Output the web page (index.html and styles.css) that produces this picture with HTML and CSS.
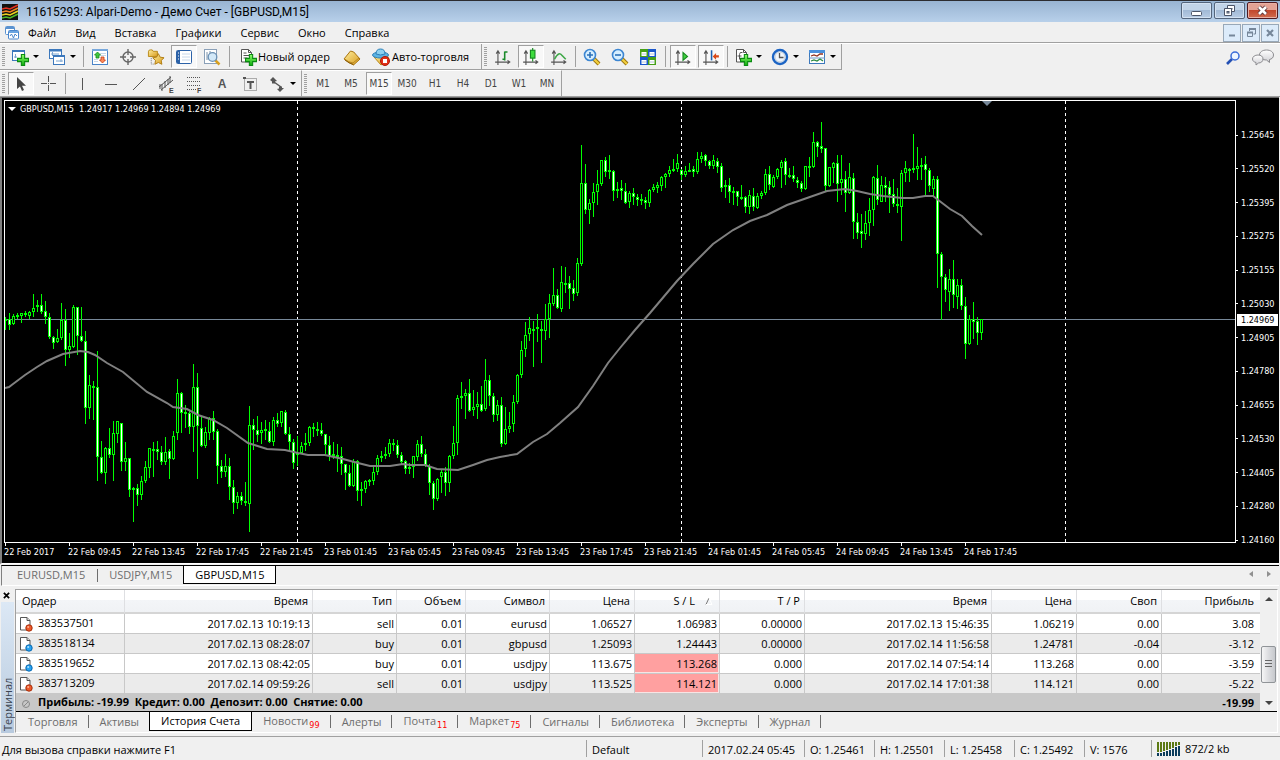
FILE: index.html
```html
<!DOCTYPE html>
<html lang="ru">
<head>
<meta charset="utf-8">
<title>11615293: Alpari-Demo - Демо Счет - [GBPUSD,M15]</title>
<link rel="stylesheet" href="styles.css">
</head>
<body>
<svg class="defs" aria-hidden="true">
  <defs>
    <linearGradient id="gGreen" x1="0" y1="0" x2="0" y2="1"><stop offset="0" stop-color="#8dff6a"/><stop offset="1" stop-color="#0ca90c"/></linearGradient>
    <linearGradient id="gGold" x1="0" y1="0" x2="1" y2="1"><stop offset="0" stop-color="#fff0a0"/><stop offset="1" stop-color="#d89a1c"/></linearGradient>
    <linearGradient id="gSilver" x1="0" y1="0" x2="0" y2="1"><stop offset="0" stop-color="#ffffff"/><stop offset="1" stop-color="#cfcfd4"/></linearGradient>
    <symbol id="plus" viewBox="0 0 11 11"><path d="M4 .5h3v3.500h3.500v3h-3.500v3.500h-3v-3.500h-3.500v-3h3.500z" fill="url(#gGreen)" stroke="#0a8a12"/></symbol>
    <symbol id="axes" viewBox="0 0 16 16"><path d="M3.500 3v12M1 12.500h13M2 5l1.500-2.500L5 5M12 11l2 1.500-2 1.500" fill="none" stroke="#555"/></symbol>
    <symbol id="lens" viewBox="0 0 18 18"><path d="M10.500 10.500l5.500 5.500" stroke="#9a7410" stroke-width="4"/><path d="M11 11l5 5" stroke="#f2cf3e" stroke-width="2.200"/><circle cx="7" cy="7" r="5.500" fill="#d7efff" stroke="#3c86d2" stroke-width="1.600"/></symbol>
    <symbol id="doc" viewBox="0 0 14 16"><path d="M1.500 1.500h6.500l3 3v9.500h-9.500z" fill="#fff" stroke="#555"/><path d="M8 1.500v3h3" fill="#ddd" stroke="#555"/></symbol>
    <symbol id="sell" viewBox="0 0 14 16"><use href="#doc" width="14" height="16"/><circle cx="10" cy="12" r="3.200" fill="#ee5a2a" stroke="#a82c08"/><circle cx="9.200" cy="11" r="1" fill="#ffb090"/></symbol>
    <symbol id="buy" viewBox="0 0 14 16"><use href="#doc" width="14" height="16"/><circle cx="10" cy="12" r="3.200" fill="#2aa4f2" stroke="#0868b0"/><circle cx="9.200" cy="11" r="1" fill="#a8e0ff"/></symbol>
  </defs>
</svg>

<header class="titlebar">
  <svg class="app-icon" viewBox="0 0 16 16"><rect width="16" height="16" fill="#111"/><g fill="none" stroke-width="1.600"><path d="M0 5l4-1 4 1 4-2 4-2" stroke="#e03020"/><path d="M0 8l4-1 4 1 4-2 4-2" stroke="#f08020"/><path d="M0 11l4-1 4 1 4-2 4-2" stroke="#e8d020"/><path d="M0 14l4-1 4 1 4-2 4-2" stroke="#50b828"/></g></svg>
  <h1>11615293: Alpari-Demo - Демо Счет - [GBPUSD,M15]</h1>
  <div class="window-buttons">
    <button aria-label="Свернуть"><svg viewBox="0 0 15 13"><rect x="2.500" y="7.500" width="10" height="4" rx="1" fill="#fff" stroke="#4c5568"/></svg></button>
    <button aria-label="Восстановить"><svg viewBox="0 0 15 13"><path d="M5.500 1.500h7v6h-7z" fill="#fff" stroke="#4c5568"/><rect x="8" y="4" width="2.500" height="1.500" fill="#4c5568"/><path d="M2.500 4.500h7v7h-7z" fill="#fff" stroke="#4c5568"/><rect x="5" y="7.500" width="2" height="1.500" fill="#b8c8e0" stroke="#4c5568"/></svg></button>
    <button class="close" aria-label="Закрыть"><svg viewBox="0 0 15 13"><path d="M4 3l7 7M11 3l-7 7" stroke="#5a3438" stroke-width="4.400"/><path d="M4 3l7 7M11 3l-7 7" stroke="#fff" stroke-width="2.600"/></svg></button>
  </div>
</header>

<nav class="menubar">
  <svg class="menu-icon" viewBox="0 0 16 16"><rect x="1.500" y="1.500" width="9" height="8" rx="1" fill="#fff" stroke="#5a92d0"/><path d="M2 3h8" stroke="#5a92d0" stroke-width="2"/><rect x="4.500" y="5.500" width="10" height="8.500" rx="1" fill="#fff" stroke="#4a86cc"/><path d="M5 7h9" stroke="#6aa4e0" stroke-width="2"/><path d="M6 11l1.500-2 2 4 1.500-4 2 2" fill="none" stroke="#4a86cc"/></svg>
  <div class="menus"><button>Файл</button><button>Вид</button><button>Вставка</button><button>Графики</button><button>Сервис</button><button>Окно</button><button>Справка</button></div>
  <div class="mdi-buttons">
    <button aria-label="Свернуть окно"><svg viewBox="0 0 12 12"><path d="M3 8.500h6" stroke="#76879a" stroke-width="2"/></svg></button>
    <button aria-label="Восстановить окно"><svg viewBox="0 0 12 12"><path d="M4.500 4v-1.500h6v4.500h-2" fill="none" stroke="#76879a"/><path d="M4 2h7" stroke="#76879a" stroke-width="2"/><path d="M2.500 5.500h5v4h-5z" fill="none" stroke="#76879a"/><path d="M2 5.500h6" stroke="#76879a" stroke-width="2"/></svg></button>
    <button aria-label="Закрыть окно"><svg viewBox="0 0 12 12"><path d="M3 3l6 6M9 3l-6 6" stroke="#76879a" stroke-width="2.200"/></svg></button>
  </div>
</nav>

<div class="toolbars">
  <div class="toolrow">
    <div class="toolbar">
      <i class="grip"></i>
      <button class="tool drop" aria-label="Новый график"><svg viewBox="0 0 18 18"><rect x="1.500" y="2.500" width="12" height="10" fill="#fff" stroke="#3c78bc"/><path d="M1 3h13" stroke="#3c78bc" stroke-width="2"/><path d="M4.500 6v4M3 9h3" stroke="#7aa4d0"/><use href="#plus" x="6" y="6" width="12" height="12"/></svg></button>
      <button class="tool drop" aria-label="Профили"><svg viewBox="0 0 18 18"><rect x="1.500" y="1.500" width="12" height="9" fill="#fff" stroke="#3c78bc"/><path d="M1 2.500h13" stroke="#3c78bc" stroke-width="2"/><rect x="5.500" y="7.500" width="11" height="9" fill="#fff" stroke="#3c78bc"/><path d="M5 8h12" stroke="#3c78bc" stroke-width="2"/><path d="M3 6h8M8 13h7M4.500 4v4M13 11v3" stroke="#7aa4d0"/></svg></button>
      <i class="sep"></i>
      <button class="tool" aria-label="Обзор рынка"><svg viewBox="0 0 18 18"><rect x="1.500" y="1.500" width="15" height="15" fill="#fff" stroke="#4a84c8"/><path d="M1 2h16" stroke="#78a8dc" stroke-width="2"/><path d="M9 5.500h6M9 7.500h6M3 11.500h4M3 13.500h4" stroke="#c8d8e8"/><path d="M6.500 4l3 3h-1.500v3h-3v-3h-1.500z" fill="#3fc63f" stroke="#178a17" stroke-width=".8"/><path d="M11.500 15l3-3h-1.500v-3h-3v3h-1.500z" fill="#ff8a5a" stroke="#c03c14" stroke-width=".8"/></svg></button>
      <button class="tool" aria-label="Окно данных"><svg viewBox="0 0 18 18"><circle cx="9" cy="9" r="5" fill="none" stroke="#666" stroke-width="1.400"/><path d="M9 1v6M9 11v6M1 9h6M11 9h6" stroke="#666" stroke-width="1.400"/></svg></button>
      <button class="tool" aria-label="Навигатор"><svg viewBox="0 0 19 18"><path d="M1.500 3.500q0-2 2-2h2l1 1.500h4.500v5.500h-9.500z" fill="url(#gGold)" stroke="#b88818"/><path d="M4.500 10v6.500h3" stroke="#777" stroke-dasharray="1 1" fill="none"/><path d="M12 5.500l1.900 3.700 4.100.6-3 2.900.7 4-3.700-1.900-3.700 1.900.7-4-3-2.900 4.100-.6z" fill="url(#gGold)" stroke="#b07c10"/></svg></button>
      <button class="tool pressed" aria-pressed="true" aria-label="Терминал"><svg viewBox="0 0 18 18"><rect x="1.500" y="2.500" width="15" height="13" rx="1" fill="#fff" stroke="#2c62a8"/><path d="M3.500 3v12" stroke="#2c62a8" stroke-width="3"/><path d="M3 5h1M3 8h1M3 11h1" stroke="#fff"/><path d="M7 6h8M7 9h8M7 12h8" stroke="#c8d8ea"/></svg></button>
      <button class="tool" aria-label="Тестер стратегий"><svg viewBox="0 0 18 18"><rect x="1.500" y="1.500" width="12" height="14" fill="#fff" stroke="#8aa0b8"/><path d="M4 4v8M7 3v4M10 4v3" stroke="#7890a8"/><path d="M12 12l4.500 4.500" stroke="#d8a020" stroke-width="2.500"/><circle cx="9.500" cy="9" r="4.300" fill="#d2e8f8" stroke="#6a90b4" stroke-width="1.300"/></svg></button>
      <i class="sep wide"></i>
      <button class="tool text order"><svg viewBox="0 0 18 18"><path d="M2.500 1.500h7l3 3v9.500h-10z" fill="#fff" stroke="#555"/><path d="M9.500 1.500v3h3M4.500 5h3M4.500 7.500h6M4.500 10h4" fill="none" stroke="#555"/><use href="#plus" x="6" y="6" width="12" height="12"/></svg>Новый ордер</button>
      <button class="tool" aria-label="MetaEditor"><svg viewBox="0 0 18 18"><path d="M1 11l6.500-8q4 .5 5 3l4.500 5-6.500 6q-5-2.500-9.500-6z" fill="url(#gGold)" stroke="#a87410"/><path d="M1.500 11q4 3.500 8.500 4l6-5" fill="none" stroke="#b88820"/><path d="M2 12q4 3.500 8.500 4.500" fill="none" stroke="#8c5c08"/></svg></button>
      <button class="tool text auto"><svg viewBox="0 0 20 18"><path d="M3 9l7 8 8-6-2-4z" fill="url(#gGold)" stroke="#b88818"/><ellipse cx="9.500" cy="7" rx="8" ry="3" fill="#5cb4e4" stroke="#2c80b8"/><path d="M5 6q0-5 4.500-5t4.500 5q-4.500 2-9 0z" fill="#8cd0f0" stroke="#2c80b8"/><circle cx="14" cy="13" r="4.500" fill="#e23018" stroke="#b01808"/><rect x="12" y="11" width="4" height="4" fill="#fff"/></svg>Авто-торговля</button>
    </div>
    <div class="toolbar">
      <i class="grip"></i>
      <button class="tool" aria-label="Бары"><svg viewBox="0 0 16 16"><use href="#axes" width="16" height="16"/><path d="M9.500 3v8M9.500 3.500h2.500M7.500 10h2" stroke="#1a8a2a" stroke-width="1.400"/></svg></button>
      <button class="tool pressed" aria-pressed="true" aria-label="Свечи"><svg viewBox="0 0 16 16"><use href="#axes" width="16" height="16"/><path d="M9.500 0v12" stroke="#178a20"/><rect x="7.500" y="2" width="4" height="7" fill="#3ddc3d" stroke="#178a20"/></svg></button>
      <button class="tool" aria-label="Линия"><svg viewBox="0 0 16 16"><use href="#axes" width="16" height="16"/><path d="M4 10q4-8 7-3l3 3" fill="none" stroke="#3fa848" stroke-width="1.400"/></svg></button>
      <i class="sep"></i>
      <button class="tool" aria-label="Увеличить"><svg viewBox="0 0 18 18"><use href="#lens" width="18" height="18"/><path d="M7 4v6M4 7h6" stroke="#2c70b8" stroke-width="1.600"/></svg></button>
      <button class="tool" aria-label="Уменьшить"><svg viewBox="0 0 18 18"><use href="#lens" width="18" height="18"/><path d="M4 7h6" stroke="#2c70b8" stroke-width="1.600"/></svg></button>
      <button class="tool" aria-label="Окна мозаикой"><svg viewBox="0 0 18 18"><path d="M1 1h8v8h-8zM9 9h8v8h-8z" fill="#46a018"/><path d="M9 1h8v8h-8zM1 9h8v8h-8z" fill="#1c58cc"/><path d="M2.500 4h5v4h-5zM10.500 4h5v4h-5zM2.500 12h5v4h-5zM10.500 12h5v4h-5z" fill="#fff"/><path d="M3 6h4M11 6h4M3 14h4M11 14h4" stroke="#b8c8d8"/></svg></button>
      <i class="sep wide"></i>
      <button class="tool pressed" aria-pressed="true" aria-label="Автопрокрутка"><svg viewBox="0 0 16 16"><use href="#axes" width="16" height="16"/><path d="M8 4v7l4-3.500z" fill="#3fd03f" stroke="#178a20"/></svg></button>
      <button class="tool pressed" aria-pressed="true" aria-label="Сдвиг графика"><svg viewBox="0 0 16 16"><use href="#axes" width="16" height="16"/><path d="M8.500 2v9" stroke="#1c60b0" stroke-width="1.400"/><path d="M9.500 7.500l3-3v2h2.500v2h-2.500v2z" fill="#d84818"/></svg></button>
      <i class="sep"></i>
      <button class="tool drop" aria-label="Индикаторы"><svg viewBox="0 0 18 18"><path d="M2.500 1.500h7l3 3v9.500h-10z" fill="#fff" stroke="#555"/><path d="M9.500 1.500v3h3M8.500 4.500q-3-1-3 2v5M3.500 8h4" fill="none" stroke="#555"/><use href="#plus" x="6" y="6" width="12" height="12"/></svg></button>
      <button class="tool drop" aria-label="Периоды"><svg viewBox="0 0 18 18"><circle cx="9" cy="9" r="7" fill="#f0f6fc" stroke="#1c64c4" stroke-width="2.400"/><circle cx="9" cy="9" r="5" fill="none" stroke="#c0ccd8"/><path d="M8.500 5v4.500h4" fill="none" stroke="#555" stroke-width="1.300"/></svg></button>
      <button class="tool drop" aria-label="Шаблоны"><svg viewBox="0 0 18 18"><rect x="1.500" y="2.500" width="15" height="13" fill="#fff" stroke="#3c78bc"/><path d="M1 3.500h16" stroke="#4a90dc" stroke-width="3"/><path d="M1 10h16" stroke="#6a98c8"/><path d="M3 8l3-1 3 1 3-2 3 0" fill="none" stroke="#903020" stroke-width="1.300"/><path d="M3 13l3-1 3 1 3-2 3 2" fill="none" stroke="#2a8a40" stroke-width="1.300"/></svg></button>
    </div>
    <div class="tool-right">
      <button class="tool" aria-label="Поиск"><svg viewBox="0 0 16 16"><path d="M7 9l-5 5" stroke="#2450b4" stroke-width="2.600"/><circle cx="10" cy="6" r="4" fill="#eef6ff" stroke="#3a6cd8" stroke-width="1.500"/></svg></button>
      <button class="tool chat" aria-label="Чат"><svg viewBox="0 0 22 17"><path d="M14.500 1c4 0 7 2 7 5s-2 4-4 4.500v3l-3-2.500c-4 0-7-2-7-5s3-5 7-5z" fill="url(#gSilver)" stroke="#8c8c90"/><path d="M6 6c3 0 5 1.500 5 4s-2 4-4.500 4l-2.500 2v-2.500c-2-.5-3.500-1.500-3.500-3.500 0-2.500 2.500-4 5.500-4z" fill="url(#gSilver)" stroke="#8c8c90"/></svg></button>
    </div>
  </div>
  <div class="toolrow">
    <div class="toolbar">
      <i class="grip"></i>
      <button class="tool pressed" aria-pressed="true" aria-label="Курсор"><svg viewBox="0 0 18 18"><path d="M5 2v12l3-2.600 2 4.600 2-1-2-4.300h4z" fill="#444"/></svg></button>
      <button class="tool" aria-label="Перекрестие"><svg viewBox="0 0 18 18"><path d="M8.500 1v6M8.500 10v6M1 8.500h6M10 8.500h6M8 8.500h1" stroke="#555"/></svg></button>
      <i class="sep"></i>
      <button class="tool" aria-label="Вертикальная линия"><svg viewBox="0 0 18 18"><path d="M9.500 3v12" stroke="#555"/></svg></button>
      <button class="tool" aria-label="Горизонтальная линия"><svg viewBox="0 0 18 18"><path d="M4 9.500h12" stroke="#555"/></svg></button>
      <button class="tool" aria-label="Трендовая линия"><svg viewBox="0 0 18 18"><path d="M4 15L16 3" stroke="#555"/></svg></button>
      <button class="tool" aria-label="Равноудалённый канал"><svg viewBox="0 0 18 18"><path d="M2 12L14 2M4 15L16 5M5 9v7M8 6v7M11 4v6M13 1v7M3 9v5" stroke="#555" fill="none"/><text x="12" y="18">E</text></svg></button>
      <button class="tool" aria-label="Линии Фибоначчи"><svg viewBox="0 0 18 18"><path d="M2 2.500h14M2 6.500h14M2 10.500h14M2 14.500h9" stroke="#555" stroke-dasharray="1 1"/><text x="12" y="18">F</text></svg></button>
      <button class="tool letter" aria-label="Текст">A</button>
      <button class="tool" aria-label="Текстовая метка"><svg viewBox="0 0 18 18"><rect x="3.500" y="3.500" width="12" height="12" fill="none" stroke="#666" stroke-dasharray="1 1"/><path d="M6 7h7M9.500 6v8" stroke="#555" stroke-width="2"/><path d="M2 2h3v2h-3z" fill="#555"/></svg></button>
      <button class="tool drop" aria-label="Стрелки"><svg viewBox="0 0 18 18"><path d="M2 5l3-3 4 4-2 .5v2h-3v-2zM16 13l-4 4-3-3 2-.5v-2h3v1.500z" fill="#555"/><path d="M6 7l7 5" stroke="#555" stroke-width="1.500"/></svg></button>
    </div>
    <div class="toolbar periods">
      <i class="grip"></i>
      <button class="tool">M1</button><button class="tool">M5</button><button class="tool pressed" aria-pressed="true">M15</button><button class="tool">M30</button><button class="tool">H1</button><button class="tool">H4</button><button class="tool">D1</button><button class="tool">W1</button><button class="tool">MN</button>
    </div>
  </div>
</div>

<main class="chart">
  <div class="plot">
    <svg id="plot" viewBox="5 101 1230 441" preserveAspectRatio="none" role="img" aria-label="График GBPUSD,M15">
      <g shape-rendering="crispEdges">
        <path class="day" d="M297.500 101V542M681.500 101V542M1065.500 101V542"/>
        <path class="price-line" d="M5 319.500H1235"/>
        <path id="wicks" class="wick"/>
        <path id="rising" class="rising"/>
        <path id="falling" class="falling"/>
      </g>
      <path class="average" d="M5 388L9 387 13 384 25 375 37 367 47 361 63 354 80 351 88 352 95 355 107 363 123 372 147 392 167 403 173 407 187 409 198 415 213 420 227 428 248 443 267 449 285 450 298 453 308 455 325 455 343 459 358 463 370 466 390 466 403 464 410 465 425 465 437 469 458 470 473 465 487 460 500 457 517 454 533 442 547 434 560 423 578 407 593 386 608 363 620 348 635 330 650 313 677 281 693 264 713 244 733 230 750 221 767 215 787 205 807 198 827 191 845 189 857 191 870 194 883 196 902 198 913 198 925 196 933 196 950 209 962 216 972 226 982 235"/>
      <path class="shift" d="M982 101h10l-5 5z"/>
    </svg>
    <p class="quote">GBPUSD,M15&nbsp; 1.24917 1.24969 1.24894 1.24969</p>
  </div>
  <div class="prices">
    <span>1.25645</span><span>1.25520</span><span>1.25395</span><span>1.25275</span><span>1.25155</span><span>1.25030</span><span>1.24905</span><span>1.24780</span><span>1.24655</span><span>1.24530</span><span>1.24405</span><span>1.24280</span><span>1.24160</span>
    <b class="current">1.24969</b>
  </div>
  <div class="times">
    <span>22 Feb 2017</span><span>22 Feb 09:45</span><span>22 Feb 13:45</span><span>22 Feb 17:45</span><span>22 Feb 21:45</span><span>23 Feb 01:45</span><span>23 Feb 05:45</span><span>23 Feb 09:45</span><span>23 Feb 13:45</span><span>23 Feb 17:45</span><span>23 Feb 21:45</span><span>24 Feb 01:45</span><span>24 Feb 05:45</span><span>24 Feb 09:45</span><span>24 Feb 13:45</span><span>24 Feb 17:45</span>
  </div>
</main>

<div class="chart-tabs">
  <button>EURUSD,M15</button><button>USDJPY,M15</button><button class="active">GBPUSD,M15</button>
  <div class="arrows"><button aria-label="Назад" class="left"></button><button aria-label="Вперёд" class="right"></button></div>
</div>

<section class="terminal">
  <aside>
    <button class="dock-close" aria-label="Закрыть терминал"><svg viewBox="0 0 8 8"><path d="M1 1l6 6M7 1L1 7" stroke="#000" stroke-width="2"/></svg></button>
    <div class="dock-title">Терминал</div>
  </aside>
  <div class="panel">
    <div class="grid-area">
      <table>
        <colgroup><col class="c-order"><col class="c-time"><col class="c-type"><col class="c-lot"><col class="c-type"><col class="c-num"><col class="c-num"><col class="c-num"><col class="c-time2"><col class="c-num"><col class="c-num"><col></colgroup>
        <thead><tr><th>Ордер</th><th>Время</th><th>Тип</th><th>Объем</th><th>Символ</th><th>Цена</th><th class="sorted">S / L<svg viewBox="0 0 8 8"><path d="M1 7.500L4 1" stroke="#777"/><path d="M4 1l3 6.500H1" fill="none" stroke="#fff"/></svg></th><th>T / P</th><th>Время</th><th>Цена</th><th>Своп</th><th>Прибыль</th></tr></thead>
        <tbody>
          <tr><td><svg viewBox="0 0 14 16"><use href="#sell"/></svg>383537501</td><td>2017.02.13 10:19:13</td><td>sell</td><td>0.01</td><td>eurusd</td><td>1.06527</td><td>1.06983</td><td>0.00000</td><td>2017.02.13 15:46:35</td><td>1.06219</td><td>0.00</td><td>3.08</td></tr>
          <tr><td><svg viewBox="0 0 14 16"><use href="#buy"/></svg>383518134</td><td>2017.02.13 08:28:07</td><td>buy</td><td>0.01</td><td>gbpusd</td><td>1.25093</td><td>1.24443</td><td>0.00000</td><td>2017.02.14 11:56:58</td><td>1.24781</td><td>-0.04</td><td>-3.12</td></tr>
          <tr><td><svg viewBox="0 0 14 16"><use href="#buy"/></svg>383519652</td><td>2017.02.13 08:42:05</td><td>buy</td><td>0.01</td><td>usdjpy</td><td>113.675</td><td class="hit">113.268</td><td>0.000</td><td>2017.02.14 07:54:14</td><td>113.268</td><td>0.00</td><td>-3.59</td></tr>
          <tr><td><svg viewBox="0 0 14 16"><use href="#sell"/></svg>383713209</td><td>2017.02.14 09:59:26</td><td>sell</td><td>0.01</td><td>usdjpy</td><td>113.525</td><td class="hit">114.121</td><td>0.000</td><td>2017.02.14 17:01:38</td><td>114.121</td><td>0.00</td><td>-5.22</td></tr>
        </tbody>
        <tfoot><tr><td colspan="11"><svg viewBox="0 0 14 16"><circle cx="7" cy="9" r="3.500" fill="#c8c8c8" stroke="#888"/><path d="M5 11l4-4" stroke="#888"/></svg>Прибыль: -19.99&nbsp; Кредит: 0.00&nbsp; Депозит: 0.00&nbsp; Снятие: 0.00</td><td>-19.99</td></tr></tfoot>
      </table>
      <div class="scrollbar"><button class="up" aria-label="Вверх"></button><i class="thumb"></i><button class="down" aria-label="Вниз"></button></div>
    </div>
    <nav class="terminal-tabs">
      <button>Торговля</button><button class="before">Активы</button><button class="active">История Счета</button><button>Новости<sub>99</sub></button><button>Алерты</button><button>Почта<sub>11</sub></button><button>Маркет<sub>75</sub></button><button>Сигналы</button><button>Библиотека</button><button>Эксперты</button><button>Журнал</button>
    </nav>
  </div>
</section>

<footer class="statusbar">
  <span class="hint">Для вызова справки нажмите F1</span>
  <span class="s-profile">Default</span><span class="s-date">2017.02.24 05:45</span><span class="s-val">O: 1.25461</span><span class="s-val">H: 1.25501</span><span class="s-val">L: 1.25458</span><span class="s-val">C: 1.25492</span><span class="s-vol">V: 1576</span>
  <span class="s-net"><svg viewBox="0 0 24 14" shape-rendering="crispEdges"><path d="M1 0v10M4 0v10M7 0v9M10 0v8M13 0v7M16 0v6M19 0v4M22 0v3" stroke="#5c7a14" stroke-width="2"/><path d="M1 11v3M4 11v3M7 10v4M10 9v5M13 8v6M16 7v7M19 5v9M22 4v10" stroke="#0c3c5c" stroke-width="2"/></svg>872/2 kb</span>
</footer>
<script src="chart.js"></script>
</body>
</html>
```

FILE: styles.css
```css
* { box-sizing: border-box; }
html, body { height: 100%; }
body {
  margin: 0;
  display: flex;
  flex-direction: column;
  background: #f0f0f0;
  color: #000;
  font: 11px/16px "Open Sans", "Noto Sans", sans-serif;
}
button {
  margin: 0;
  padding: 0;
  border: 0;
  background: none;
  color: inherit;
  font: inherit;
}
svg { display: block; flex: none; }
.defs { position: absolute; width: 0; height: 0; }

/* Title bar */
.titlebar {
  display: flex;
  height: 22px;
  align-items: center;
  padding: 0 2px;
  border-top: 1px solid #2c2c30;
  background: linear-gradient(#98b4d2, #b8d0ea);
}
.app-icon { width: 16px; height: 16px; }
.titlebar h1 { flex: 1; margin: 0 0 0 8px; font: 400 12px/20px Roboto, "Open Sans", sans-serif; }
.window-buttons { display: flex; gap: 2px; align-self: flex-start; padding-top: 1px; }
.window-buttons button {
  display: grid;
  place-items: center;
  width: 31px;
  height: 17px;
  border: 1px solid #54657c;
  border-radius: 2px;
  box-shadow: inset 0 0 0 1px #d4e2f2;
  background: linear-gradient(#c2d4e8 45%, #a2bad6 50%, #b8cce4);
}
.window-buttons .close {
  border-color: #501a20;
  box-shadow: inset 0 0 0 1px #e8b0a4;
  background: linear-gradient(#e4a294 45%, #c2472c 50%, #d06c50);
}
.window-buttons svg { width: 15px; height: 13px; }

/* Menu */
.menubar {
  display: flex;
  height: 22px;
  align-items: center;
  border-bottom: 1px solid #fff;
  box-shadow: inset 0 -1px #a0a0a0;
}
.menu-icon { width: 16px; height: 16px; margin-left: 4px; }
.menus { display: flex; gap: 19px; padding-left: 8px; }
.menus button { height: 20px; }
.mdi-buttons { display: flex; gap: 1px; margin-left: auto; padding-right: 1px; }
.mdi-buttons button {
  display: grid;
  place-items: center;
  width: 18px;
  height: 18px;
  border: 1px solid #98a8b8;
  background: #dcebfa;
}
.mdi-buttons svg { width: 12px; height: 12px; }

/* Toolbars */
.toolbars { border-bottom: 1px solid #a0a0a0; }
.toolrow { display: flex; height: 26px; }
.toolbar { display: flex; border-right: 1px solid #a0a0a0; border-bottom: 1px solid #a0a0a0; }
.toolrow + .toolrow .toolbar { border-bottom: 0; border-top: 1px solid #fff; }
.grip {
  flex: none;
  width: 3px;
  margin: 3px 2px;
  background: repeating-linear-gradient(#a0a0a0 0 1px, #f0f0f0 1px 2px);
}
.tool {
  display: flex;
  flex: none;
  align-items: center;
  justify-content: center;
  width: 28px;
  height: 25px;
}
.tool svg { width: 18px; height: 18px; }
.tool svg text { font: 700 7px "Liberation Sans", sans-serif; fill: #444; }
.tool.drop { width: 37px; justify-content: flex-start; padding-left: 4px; }
.tool.drop::after {
  content: "";
  margin-left: 4px;
  border: 3px solid transparent;
  border-top-color: #000;
  border-bottom-width: 0;
}
.tool.pressed {
  width: 26px;
  margin: 1px 1px 0;
  height: 23px;
  border: 1px solid #a0a0a0;
  border-right-color: #fff;
  border-bottom-color: #fff;
  background: #f8f8f8;
}
.tool.text { justify-content: flex-start; gap: 1px; }
.order { width: 105px; padding-left: 6px; }
.auto { width: 115px; padding-left: 5px; }
.auto svg { width: 20px; }
.letter { color: #555; font: 700 12px "Liberation Sans", sans-serif; }
.sep { flex: none; width: 1px; margin: 2px; background: #a0a0a0; }
.sep.wide { margin: 2px 3px; }
.tool-right { display: flex; gap: 2px; margin-left: auto; padding: 1px 3px 0 0; }
.tool-right svg { width: 16px; height: 16px; }
.tool-right .chat svg { width: 22px; height: 17px; }
.periods .tool { color: #444; font: 10px "DejaVu Sans Condensed", sans-serif; }

/* Chart */
.chart {
  flex: 1;
  min-height: 0;
  display: grid;
  grid-template: minmax(0, 1fr) 20px / minmax(0, 1fr) 43px;
  margin-right: 1px;
  padding: 2px 0 0 2px;
  border-top: 1px solid #696969;
  border-left: 2px solid #808080;
  border-bottom: 1px solid #fff;
  background: #000;
  color: #fff;
  font: 9px/12px "DejaVu Sans Condensed", sans-serif;
}
.plot { position: relative; border: 1px solid #fff; }
.plot svg { width: 100%; height: 100%; }
.quote {
  position: absolute;
  top: 2px;
  left: 3px;
  display: flex;
  align-items: center;
  gap: 4px;
  margin: 0;
}
.quote::before { content: ""; border: 4px solid transparent; border-top-color: #fff; border-bottom-width: 0; }
.day { fill: none; stroke: #fff; stroke-dasharray: 3 3; }
.price-line { fill: none; stroke: #778899; }
.wick { fill: none; stroke: #0f0; }
.rising { fill: #000; stroke: #0f0; }
.falling { fill: #fff; stroke: #0f0; }
.average { fill: none; stroke: #808080; stroke-width: 2; }
.shift { fill: #778899; }
.prices {
  position: relative;
  display: flex;
  flex-direction: column;
  justify-content: space-between;
  padding-top: 29px;
  margin-bottom: -3px;
}
.prices span { display: flex; align-items: center; gap: 3px; }
.prices span::before { content: ""; width: 2px; height: 1px; background: #fff; }
.current {
  position: absolute;
  top: 48%;
  left: 1px;
  width: 41px;
  padding-left: 4px;
  background: #fff;
  color: #000;
  font-weight: 400;
}
.times { grid-column: 1 / 3; display: flex; overflow: hidden; }
.times span { flex: 0 0 64px; padding-top: 3px; position: relative; white-space: nowrap; }
.times span::before { content: ""; position: absolute; top: 0; left: 1px; width: 1px; height: 3px; background: #fff; }

/* Chart tabs */
.chart-tabs {
  display: flex;
  height: 21px;
  margin: 1px 1px 3px 1px;
  border-top: 1px solid #000;
  border-left: 1px solid #808080;
  border-bottom: 1px solid #fff;
  color: #6d6d6d;
}
.chart-tabs > button { height: 18px; padding: 0 11px; position: relative; }
.chart-tabs > button:first-child { padding-left: 15px; padding-right: 13px; }
.chart-tabs > button:first-child::after { content: ""; position: absolute; right: 0; top: 3px; width: 1px; height: 13px; background: #6d6d6d; }
.chart-tabs .active { border: 1px solid #000; border-top: 0; background: #fff; color: #000; }
.arrows { display: flex; gap: 14px; margin: 5px 8px 0 auto; }
.arrows button { width: 4px; height: 6px; border: 3px solid transparent; }
.arrows .left { border-left: 0; border-right: 4px solid #909090; }
.arrows .right { border-right: 0; border-left: 4px solid #909090; }

/* Terminal */
.terminal { display: flex; height: 147px; border-bottom: 3px solid #f0f0f0; }
.terminal aside { width: 15px; display: flex; flex-direction: column; padding: 0 1px; }
.dock-close { width: 11px; height: 13px; display: grid; place-items: center; }
.dock-close svg { width: 7px; height: 7px; }
.dock-title {
  flex: 1;
  width: 13px;
  background: linear-gradient(#b8cade, #dce8f5);
  color: #3c4450;
  writing-mode: vertical-rl;
  transform: rotate(180deg);
  line-height: 13px;
  padding-top: 2px;
}
.panel { flex: 1; min-width: 0; margin-right: 2px; border: 1px solid #a0a0a0; border-right-color: #fff; border-bottom-color: #fff; }
.grid-area { display: flex; border-bottom: 1px solid #000; }
table { flex: 1; width: 100%; table-layout: fixed; border-collapse: separate; border-spacing: 0; }
.c-order { width: 109px; }
.c-time { width: 188px; }
.c-time2 { width: 187px; }
.c-type { width: 84px; }
.c-lot { width: 69px; }
.c-num { width: 85px; }
th, td { padding: 0; text-align: right; white-space: nowrap; font-weight: 400; }
th {
  height: 24px;
  padding-right: 4px;
  border-right: 1px solid #dedfe2;
  border-bottom: 2px solid #d5d5d5;
  background: linear-gradient(#fff 45%, #f3f5f8 46%, #f0f2f5);
}
th:first-child { padding-left: 6px; text-align: left; }
th svg { display: inline-block; width: 8px; height: 8px; margin: 0 2px 0 10px; }
tbody td { height: 20px; padding-right: 2px; border-right: 1px solid #c8c8c8; border-bottom: 1px solid #c8c8c8; background: #fff; }
tbody tr:nth-child(even) td { background: #ebebeb; }
tbody td:last-child, th:last-child { border-right: 0; padding-right: 6px; }
tbody td.hit, tbody tr:nth-child(even) td.hit { background: #ffa0a0; box-shadow: inset -1px -1px #f8e4e4; }
td:first-child { text-align: left; }
td svg { display: inline-block; width: 14px; height: 16px; margin: 0 5px 0 3px; vertical-align: middle; }
tfoot td { height: 17px; padding-right: 6px; background: #c8c8c8; font-weight: 700; }
.scrollbar { width: 17px; display: flex; flex-direction: column; align-items: center; padding: 7px 0 6px; background: #f0f0f0; }
.scrollbar button { width: 8px; height: 4px; border: 4px solid transparent; }
.scrollbar .up { border-top: 0; border-bottom-color: #444; }
.scrollbar .down { border-bottom: 0; border-top-color: #444; margin-top: auto; }
.thumb {
  width: 15px;
  height: 37px;
  margin-top: 45px;
  border: 1px solid #909498;
  border-radius: 2px;
  background:
    repeating-linear-gradient(#666 0 1px, transparent 1px 3px) center / 7px 9px no-repeat,
    linear-gradient(90deg, #f6f6f6, #dcdde0 50%, #c6c8cc);
}
.terminal-tabs { display: flex; color: #6d6d6d; }
.terminal-tabs button { position: relative; height: 19px; padding: 0 11px; white-space: nowrap; }
.terminal-tabs button:first-child { padding: 0 12px; }
.terminal-tabs .before { padding: 0 10px; }
.terminal-tabs button:not(.active):not(.before)::after { content: ""; position: absolute; right: 0; top: 3px; width: 1px; height: 13px; background: #6d6d6d; }
.terminal-tabs .active { border: 1px solid #000; border-top: 0; background: #fff; color: #000; }
.terminal-tabs sub { margin-left: 1px; color: #f00; font: 9px/9px "DejaVu Sans Condensed", sans-serif; vertical-align: -3px; }

/* Status bar */
.statusbar { display: flex; height: 24px; padding-top: 2px; border-top: 1px solid #a0a0a0; line-height: 21px; }
.hint { flex: 1; padding-left: 2px; }
.statusbar span { white-space: nowrap; }
.statusbar span + span { padding-left: 5px; border-left: 1px solid #a0a0a0; margin: 1px 0 3px; line-height: 19px; }
.s-profile { width: 116px; }
.s-date { width: 102px; }
.s-val { width: 70px; }
.s-vol { width: 67px; }
.s-net { display: flex; align-items: center; gap: 4px; width: 129px; }
.s-net svg { width: 24px; height: 14px; }
```

FILE: chart.js
```js
// One candle every 4 units: high, open, close, low on the plot's vertical scale.
const candles = `
317 319 321 330|313 319 325 330|314 324 316 325|313 316 315 319|313 316 313 323|311 313 315 317|311 316 312 319|294 312 308 317
300 307 305 312|294 305 312 314|301 311 317 324|313 317 337 339|336 337 343 349|329 342 338 343|303 338 320 340|309 320 350 366
333 350 346 358|305 347 307 348|307 307 336 355|307 336 341 342|331 341 408 424|375 408 385 419|381 386 388 420|351 387 457 481
441 457 473 474|447 473 448 484|428 448 455 458|421 455 433 481|421 434 421 443|423 423 462 471|442 462 458 471|458 458 490 497
487 488 490 522|484 488 495 506|476 495 481 500|461 481 467 483|448 468 448 478|442 449 451 477|441 449 452 460|446 452 462 465
437 462 452 465|449 451 459 479|431 459 436 460|379 433 393 440|392 393 413 433|405 412 413 428|410 413 427 434|364 427 387 452
373 387 426 479|417 428 446 447|427 446 432 448|417 433 418 440|411 418 432 440|429 431 466 484|460 466 472 478|454 472 466 477
458 466 487 500|480 487 503 514|492 503 496 509|492 496 501 505|482 501 503 506|406 504 425 532|419 425 430 450|416 430 435 442
422 433 430 444|420 429 431 440|422 431 442 443|417 442 420 446|413 420 424 427|411 423 411 427|410 412 434 435|427 434 442 451
439 442 463 469|436 454 453 466|442 453 446 454|433 444 443 451|426 443 427 446|423 427 429 437|422 429 431 436|423 430 434 436
434 434 445 454|436 445 456 461|442 454 456 459|444 455 456 472|447 456 464 475|464 464 473 490|465 473 486 487|459 486 461 487
460 461 491 501|482 491 489 506|480 489 481 493|479 480 482 486|467 481 472 485|455 472 458 475|451 456 458 462|447 456 454 459
439 454 443 457|439 443 445 451|440 445 455 458|452 455 462 464|460 461 469 474|463 467 469 474|456 467 456 478|440 457 444 461
436 444 454 457|449 454 465 467|464 466 483 495|481 483 499 510|478 499 479 501|470 477 472 493|467 472 483 496|455 483 456 492
426 456 443 459|395 443 398 455|382 396 397 409|389 396 393 419|379 393 411 412|390 410 407 416|392 407 404 419|386 404 411 412
359 409 380 411|375 380 396 406|393 396 415 422|400 415 405 421|397 405 444 447|407 444 429 445|412 429 426 433|395 424 402 432
374 402 375 404|341 375 350 378|322 349 335 357|317 334 328 341|321 329 330 367|314 327 329 342|321 329 331 363|304 331 319 340
294 319 303 338|268 304 295 306|289 295 308 309|266 309 282 312|267 283 284 293|276 283 289 309|280 288 294 301|258 293 263 296
145 264 183 266|164 183 210 214|199 210 203 224|183 203 192 217|170 192 184 205|160 184 160 186|157 160 172 177|155 170 171 179
170 171 191 201|182 191 189 198|180 188 191 200|183 191 203 204|191 202 193 208|188 193 197 205|194 197 200 206|194 199 201 205
197 200 203 209|189 203 190 207|184 190 187 192|182 188 185 193|176 186 177 191|173 177 174 188|166 174 170 177|159 169 170 172
154 169 163 172|169 170 175 180|166 175 171 177|163 170 171 172|166 169 172 177|152 172 159 174|152 159 156 163|154 155 161 166
160 161 166 169|155 166 160 169|158 161 167 173|163 166 188 192|180 185 187 198|178 185 192 203|187 191 193 205|191 191 197 206
185 197 198 200|196 197 207 213|190 207 195 214|188 196 207 211|193 208 196 209|191 196 193 199|169 193 174 195|166 174 185 190
175 187 177 188|168 177 169 179|160 168 162 188|158 161 175 185|168 175 176 178|166 175 179 182|177 180 183 188|181 183 189 192
166 189 166 190|157 166 167 177|132 167 142 168|141 142 147 157|122 146 149 153|148 148 186 192|167 186 167 187|162 168 163 183
155 163 184 202|155 183 179 195|171 179 193 212|163 193 177 194|173 178 222 239|213 222 233 239|214 231 234 248|211 234 223 240
198 223 210 236|176 210 177 226|165 178 200 205|176 202 185 202|177 185 188 202|181 187 195 213|179 194 204 207|188 204 206 213
170 207 173 241|161 173 168 182|168 169 170 182|134 168 170 173|147 169 166 180|158 165 167 180|156 164 170 195|168 170 186 192
176 189 179 196|176 179 254 288|252 254 277 320|274 277 290 302|269 292 279 311|260 279 295 308|279 297 285 309|279 285 306 310
297 306 344 359|315 344 319 345|302 319 322 339|317 321 333 345|319 333 319 340`
  .trim().split(/[\n|]/).map(row => row.split(" ").map(Number));

let wicks = "", rising = "", falling = "";
candles.forEach(([high, open, close, low], i) => {
  const x = 5 + i * 4;
  const top = Math.min(open, close), height = Math.abs(close - open);
  wicks += `M${x + 0.5} ${high}V${low}`;
  const body = `M${x - 0.5} ${top + 0.5}h2v${height - (height > 1 ? 1 : 0)}h-2z`;
  if (close > open) falling += body; else rising += body;
});
document.getElementById("wicks").setAttribute("d", wicks);
document.getElementById("rising").setAttribute("d", rising);
document.getElementById("falling").setAttribute("d", falling);
```
